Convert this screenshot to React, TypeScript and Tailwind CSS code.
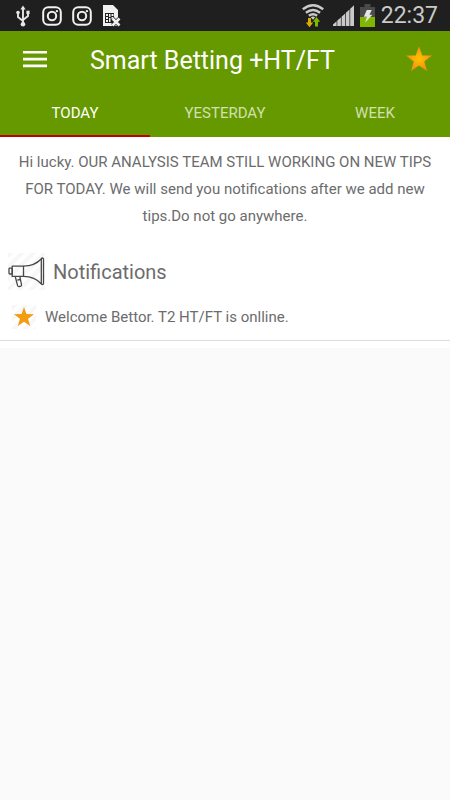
import { useState } from "react";
import { clsx } from "clsx";

const TABS = ["TODAY", "YESTERDAY", "WEEK"];

const STAR_POINTS = "12,1 14.8,8.9 23.2,9.1 16.5,14.2 18.9,22.3 12,17.5 5.1,22.3 7.5,14.2 0.8,9.1 9.2,8.9";

function UsbIcon() {
  return (
    <svg viewBox="0 0 14 22" className="h-[22px] w-[14px]" fill="none" stroke="#e6e6e6" strokeWidth="1.9">
      <path d="M7 3v16M2 8v4l5 4M12 8v3l-5 4" />
      <path d="M7 0.5l2.6 4H4.4z" fill="#e6e6e6" stroke="none" />
      <circle cx="7" cy="19.2" r="2.3" fill="#e6e6e6" stroke="none" />
      <circle cx="2" cy="7.5" r="1.8" fill="#e6e6e6" stroke="none" />
      <path d="M10.4 5.7h3.2v3.4h-3.2z" fill="#e6e6e6" stroke="none" />
    </svg>
  );
}

function InstagramIcon() {
  return (
    <svg viewBox="0 0 20 20" className="h-5 w-5" fill="none" stroke="#f0f0f0" strokeWidth="2">
      <rect x="1.2" y="1.2" width="17.6" height="17.6" rx="5" />
      <circle cx="10" cy="10" r="4.2" />
      <circle cx="14.9" cy="5.1" r="1.2" fill="#f0f0f0" stroke="none" />
    </svg>
  );
}

function NoSimIcon() {
  return (
    <svg viewBox="0 0 19 22" className="h-[22px] w-[19px]">
      <path d="M1 0h10l5 5v16H1z" fill="#f0f0f0" />
      <path d="M3 8h9v10H3z" fill="#1f1f1f" />
      <path
        d="M4 9h2v2H4zM7 9h1.5v3H7zM9.5 9h2v2h-2zM4 12h2v2H4zM7 13h1.5v4H7zM9.5 12h2v2h-2zM4 15h2v2H4z"
        fill="#f0f0f0"
      />
      <path d="M10.5 13.5l7 7M17.5 13.5l-7 7" stroke="#1f1f1f" strokeWidth="4" />
      <path d="M10.5 13.5l7 7M17.5 13.5l-7 7" stroke="#f0f0f0" strokeWidth="2.6" />
    </svg>
  );
}

function WifiIcon() {
  return (
    <svg viewBox="0 0 22 24" className="h-6 w-[22px]" fill="none" stroke="#c9c9c9" strokeWidth="2.4">
      <path d="M0.8 5.3Q11 -2.7 21.2 5.3" />
      <path d="M3.9 8.7Q11 3.1 18.1 8.7" />
      <path d="M6.9 11.8Q11 8.6 15.1 11.8" />
      <path d="M8.8 13.2Q11 11.6 13.2 13.2L11 15.8z" fill="#c9c9c9" stroke="none" />
      <path d="M6 14h3v4.5h2.2L7.5 23.3 3.8 18.5H6z" fill="#d9ae00" stroke="none" />
      <path d="M13 22.6h3v-4.8h2.2L14.5 13l-3.7 4.8H13z" fill="#7fb800" stroke="none" />
    </svg>
  );
}

function SignalIcon() {
  return (
    <svg viewBox="0 0 21 21" className="h-[21px] w-[21px]" fill="#c9c9c9">
      <path d="M0 21v-1.6L3.6 16.3v4.7zM4.3 21v-5.4L7.9 12.4v8.6zM8.6 21v-9.2L12.2 8.6v12.4zM12.9 21V7.8l3.6-3.2V21zM17.2 21V3.7L21 0.3V21z" />
    </svg>
  );
}

function BatteryIcon() {
  return (
    <svg viewBox="0 0 15 23" className="h-[23px] w-[15px]">
      <path d="M4.5 0h6v3H15v20H0V3h4.5z" fill="#4a4a4a" />
      <path d="M0 13h15v10H0z" fill="#80b500" />
      <path d="M6.8 6h5L9.4 10.8h3L5 18.8l2-6H3.8z" fill="#e6e6e6" />
    </svg>
  );
}

// Faint diagonal stripes behind the list icons
function Stripes({ id }: { id: string }) {
  return (
    <>
      <defs>
        <pattern id={id} width="8" height="8" patternUnits="userSpaceOnUse" patternTransform="rotate(45)">
          <rect width="4" height="8" fill="#f7f7f7" />
        </pattern>
      </defs>
      <rect width="100%" height="100%" fill={`url(#${id})`} />
    </>
  );
}

function MegaphoneIcon() {
  return (
    <svg viewBox="0 0 37 37" className="h-[37px] w-[37px] shrink-0" aria-hidden="true">
      <Stripes id="megaphone-stripes" />
      <g fill="none" stroke="#484848" strokeWidth="1.3" strokeLinejoin="round">
        <rect x="1" y="15.2" width="3.2" height="5.8" rx="0.8" />
        <path d="M4.2 13.2h11.3v10.2H4.2z" />
        <path d="M15.5 13.2C23 13 29 10.5 33.5 5.7M15.5 23.4C23 23.6 29 26 33.5 31" />
        <rect x="33.3" y="5" width="2.2" height="26.6" rx="1.1" />
        <path d="M7.2 23.4l2.4 9.2q0.4 1.2 1.6 0.9l1.5-0.4q1.1-0.4 0.8-1.5l-1.7-8.2" />
        <path d="M9.3 27.1l3-.6" />
      </g>
    </svg>
  );
}

export default function App() {
  const [activeTab, setActiveTab] = useState("TODAY");

  return (
    <div className="min-h-screen bg-[#fafafa] font-['Roboto',sans-serif] text-[#6c6c6c]">
      {/* Status bar */}
      <div className="flex h-[31px] items-center justify-between bg-[#1f1f1f] pr-3 pl-4">
        <div className="flex items-center gap-[10px]">
          <UsbIcon />
          <div className="ml-[2px] flex gap-[10px]">
            <InstagramIcon />
            <InstagramIcon />
          </div>
          <NoSimIcon />
        </div>
        <div className="flex items-center">
          <WifiIcon />
          <div className="ml-[9px]">
            <SignalIcon />
          </div>
          <div className="ml-[6px]">
            <BatteryIcon />
          </div>
          <span className="ml-[6px] text-[23px] leading-none text-[#c9c9c9]">22:37</span>
        </div>
      </div>

      <header className="bg-[#669900] text-white">
        <div className="flex h-[60px] items-center pr-[17px] pl-[23px]">
          <button type="button" aria-label="Open menu" className="w-6 pb-1">
            <svg viewBox="0 0 24 18" className="h-[18px] w-6" fill="#ffffff">
              <path d="M0 1h24v2.6H0zM0 7.8h24v2.6H0zM0 14.6h24v2.6H0z" />
            </svg>
          </button>
          <h1 className="ml-[43px] flex-1 text-[25px] whitespace-nowrap">Smart Betting +HT/FT</h1>
          <button type="button" aria-label="Favourites" className="pb-1">
            <svg viewBox="0 0 24 24" className="h-7 w-7">
              <defs>
                <radialGradient id="star-fill">
                  <stop offset="0" stopColor="#ffc400" />
                  <stop offset="1" stopColor="#f58a10" />
                </radialGradient>
              </defs>
              <polygon points={STAR_POINTS} fill="url(#star-fill)" />
            </svg>
          </button>
        </div>

        <div role="tablist" className="grid grid-cols-3">
          {TABS.map((tab) => (
            <button
              key={tab}
              type="button"
              role="tab"
              aria-selected={tab === activeTab}
              onClick={() => setActiveTab(tab)}
              className={clsx(
                "h-[46px] border-b-2 text-[15px]",
                tab === activeTab ? "border-[#c00000] text-white" : "border-transparent text-[#d1e0b2]"
              )}
            >
              {tab}
            </button>
          ))}
        </div>
      </header>

      <main className="bg-white pb-[7px]">
        <p className="px-3 pt-3 text-center text-[15px] leading-[27px]">
          Hi lucky. OUR ANALYSIS TEAM STILL WORKING ON NEW TIPS FOR TODAY. We will send you notifications after we add
          new tips.Do not go anywhere.
        </p>

        <div className="mt-[23px] flex items-center gap-2 pl-2">
          <MegaphoneIcon />
          <h2 className="text-xl">Notifications</h2>
        </div>

        <ul className="pt-1">
          <li className="flex h-[47px] items-center gap-[9px] border-b border-[#dddddd] pl-3">
            <svg viewBox="0 0 24 24" className="h-6 w-6 shrink-0" aria-hidden="true">
              <Stripes id="star-stripes" />
              <polygon points={STAR_POINTS} fill="#f39c12" transform="translate(1.2 1) scale(0.9)" />
            </svg>
            <span className="text-[15px]">Welcome Bettor. T2 HT/FT is onlline.</span>
          </li>
        </ul>
      </main>
    </div>
  );
}
